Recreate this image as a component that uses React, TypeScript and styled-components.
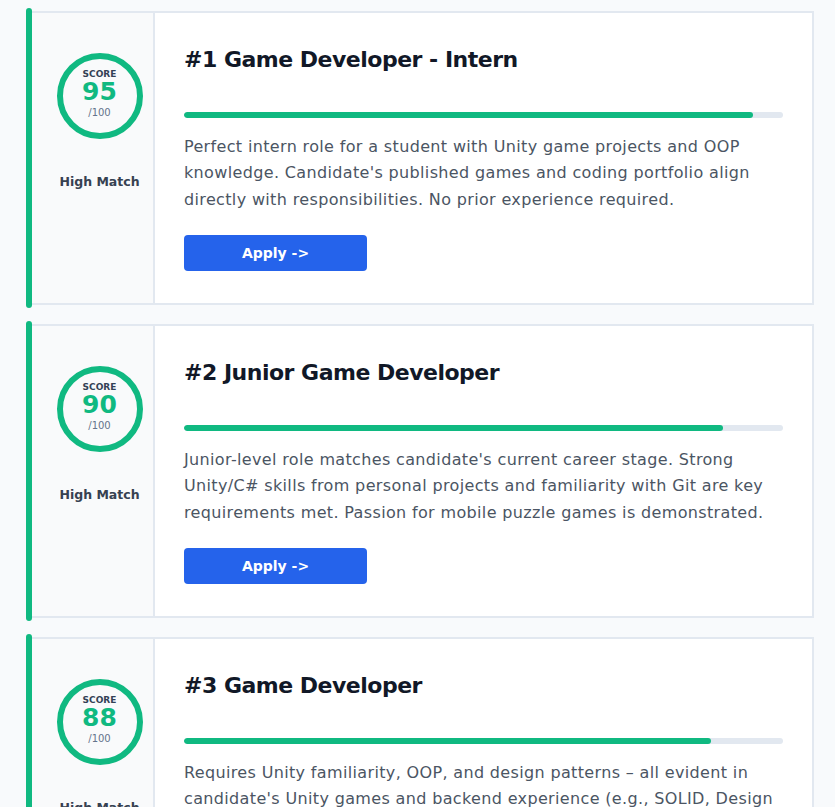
import React from "react";
import styled, { createGlobalStyle } from "styled-components";

const GlobalStyle = createGlobalStyle`
  html, body {
    margin: 0;
    padding: 0;
    background: #f8fafc;
  }
  body {
    font-family: "DejaVu Sans", "Open Sans", sans-serif;
    -webkit-font-smoothing: antialiased;
  }
  * { box-sizing: border-box; }
`;

const List = styled.div`
  display: flex;
  flex-direction: column;
  gap: 19px;
  padding: 11px 21px 24px 26px;
`;

const Card = styled.article`
  position: relative;
  display: flex;
  min-height: 294px;
  background: #ffffff;
  border: 2px solid #e2e8f0;
  border-left: 6px solid #10b981;

  &::before {
    content: "";
    position: absolute;
    left: -6px;
    top: -5px;
    bottom: -5px;
    width: 6px;
    border-radius: 3px;
    background: #10b981;
  }
`;

const ScorePanel = styled.aside`
  flex: 0 0 123px;
  display: flex;
  flex-direction: column;
  align-items: center;
  padding: 40px 0 0 14px;
  gap: 35px;
  background: #f9fafb;
  border-right: 2px solid #e2e8f0;
`;

const Ring = styled.div`
  width: 86px;
  height: 86px;
  border-radius: 50%;
  border: 6px solid #10b981;
  display: flex;
  flex-direction: column;
  align-items: center;
  justify-content: center;
  padding-bottom: 3px;
`;

const ScoreLabel = styled.span`
  font-size: 9px;
  font-weight: 700;
  color: #334155;
  line-height: 11px;
`;

const ScoreValue = styled.span`
  font-size: 25px;
  font-weight: 700;
  color: #10b981;
  line-height: 23px;
`;

const ScoreMax = styled.span`
  margin-top: 3px;
  font-size: 10px;
  color: #64748b;
  line-height: 14px;
`;

const MatchLabel = styled.span`
  font-size: 12.5px;
  font-weight: 700;
  color: #374151;
`;

const Body = styled.div`
  flex: 1;
  display: flex;
  flex-direction: column;
  align-items: flex-start;
  padding: 33px 29px 32px 29px;
`;

const Title = styled.h2`
  margin: 0 0 37px;
  font-size: 22px;
  line-height: 28.6px;
  font-weight: 700;
  letter-spacing: -0.5px;
  color: #111827;
`;

const Track = styled.div`
  align-self: stretch;
  height: 6px;
  border-radius: 3px;
  background: #e2e8f0;
  overflow: hidden;
`;

const Fill = styled.div`
  height: 100%;
  border-radius: 3px;
  background: #10b981;
`;

const Description = styled.p`
  margin: 16px 0 21px;
  font-size: 16px;
  line-height: 26.67px;
  letter-spacing: 0.35px;
  color: #4b5563;
`;

const ApplyButton = styled.button`
  width: 183px;
  height: 36px;
  border: none;
  border-radius: 4px;
  background: #2563eb;
  color: #ffffff;
  font-family: inherit;
  font-size: 14px;
  font-weight: 700;
  cursor: pointer;
`;

type Job = {
  rank: number;
  title: string;
  score: number;
  match: string;
  description: string;
};

const jobs: Job[] = [
  {
    rank: 1,
    title: "Game Developer - Intern",
    score: 95,
    match: "High Match",
    description:
      "Perfect intern role for a student with Unity game projects and OOP knowledge. Candidate's published games and coding portfolio align directly with responsibilities. No prior experience required.",
  },
  {
    rank: 2,
    title: "Junior Game Developer",
    score: 90,
    match: "High Match",
    description:
      "Junior-level role matches candidate's current career stage. Strong Unity/C# skills from personal projects and familiarity with Git are key requirements met. Passion for mobile puzzle games is demonstrated.",
  },
  {
    rank: 3,
    title: "Game Developer",
    score: 88,
    match: "High Match",
    description:
      "Requires Unity familiarity, OOP, and design patterns \u2013 all evident in candidate's Unity games and backend experience (e.g., SOLID, Design Patterns). Strong fit for core technical requirements.",
  },
];

export default function App() {
  return (
    <>
      <GlobalStyle />
      <List>
        {jobs.map((job) => (
          <Card key={job.rank}>
            <ScorePanel>
              <Ring>
                <ScoreLabel>SCORE</ScoreLabel>
                <ScoreValue>{job.score}</ScoreValue>
                <ScoreMax>/100</ScoreMax>
              </Ring>
              <MatchLabel>{job.match}</MatchLabel>
            </ScorePanel>
            <Body>
              <Title>
                #{job.rank} {job.title}
              </Title>
              <Track>
                <Fill style={{ width: `${job.score}%` }} />
              </Track>
              <Description>{job.description}</Description>
              <ApplyButton>Apply -&gt;</ApplyButton>
            </Body>
          </Card>
        ))}
      </List>
    </>
  );
}
